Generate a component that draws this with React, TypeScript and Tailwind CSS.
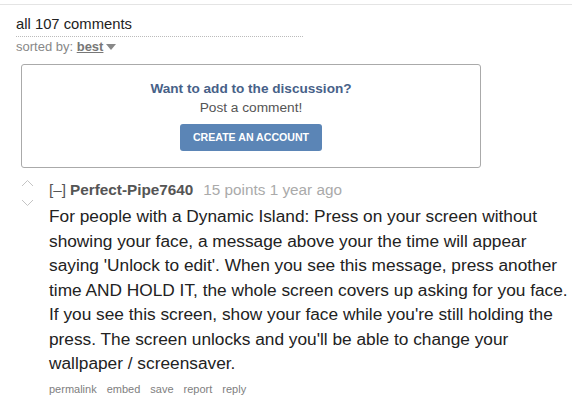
export default function App() {
  return (
    <div className="min-h-[402px] w-[572px] bg-white font-['Liberation_Sans',Arial,sans-serif] text-[#222]">
      <div className="pt-[4px]">
        <div className="h-px bg-[#e4e4e4]" />
      </div>

      <div className="pl-[16px] pt-[10px]">
        <div className="w-[287px] border-b border-dotted border-[#bbb] pb-[3px] text-[14.8px] leading-[18px] text-[#222]">
          all 107 comments
        </div>
        <div className="mt-[2px] flex items-center text-[13px] leading-[16px] text-[#888]">
          sorted by:&nbsp;
          <span className="font-bold text-[#777] underline">best</span>
          <svg width="10" height="7" viewBox="0 0 10 7" className="ml-[3px]">
            <path d="M0 0 H10 L5 6 Z" fill="#888" />
          </svg>
        </div>
      </div>

      <div className="ml-[21px] mt-[9px] flex h-[104px] w-[460px] flex-col items-center rounded-[3px] border border-[#aaa] pt-[15px]">
        <div className="text-[13.6px] font-bold leading-[18px] text-[#476188]">
          Want to add to the discussion?
        </div>
        <div className="mt-[1px] text-[13.7px] leading-[18px] text-[#555]">Post a comment!</div>
        <button className="mt-[7px] h-[27px] w-[142px] rounded-[3px] bg-[#5b85b6] text-[10.6px] font-bold text-white">
          CREATE AN ACCOUNT
        </button>
      </div>

      <div className="mt-[6px] flex">
        <div className="flex w-[49px] flex-col items-center pl-[6px] pt-[5px]">
          <svg width="13" height="8" viewBox="0 0 13 8">
            <path d="M1 7 L6.5 1.5 L12 7" fill="none" stroke="#c4c4c4" strokeWidth="1" />
          </svg>
          <svg width="13" height="8" viewBox="0 0 13 8" className="mt-[12px]">
            <path d="M1 1 L6.5 6.5 L12 1" fill="none" stroke="#c4c4c4" strokeWidth="1" />
          </svg>
        </div>
        <div className="flex-1 pt-[6px]">
          <div className="flex items-baseline text-[15.3px] leading-[20px]">
            <span className="text-[#555]">[–]</span>
            <span className="ml-[4px] font-bold text-[#555]">Perfect-Pipe7640</span>
            <span className="ml-[10px] text-[#aaa]">15 points 1 year ago</span>
          </div>
          <p className="mt-[4px] w-[523px] text-[17.3px] leading-[24.5px] text-[#222]">
            For people with a Dynamic Island: Press on your screen without showing your face, a message above your the time will appear saying 'Unlock to edit'. When you see this message, press another time AND HOLD IT, the whole screen covers up asking for you face. If you see this screen, show your face while you're still holding the press. The screen unlocks and you'll be able to change your wallpaper / screensaver.
          </p>
          <div className="mt-[6px] flex gap-[10px] text-[11px] leading-[14px] text-[#808080]">
            <span>permalink</span>
            <span>embed</span>
            <span>save</span>
            <span>report</span>
            <span>reply</span>
          </div>
        </div>
      </div>
    </div>
  )
}
